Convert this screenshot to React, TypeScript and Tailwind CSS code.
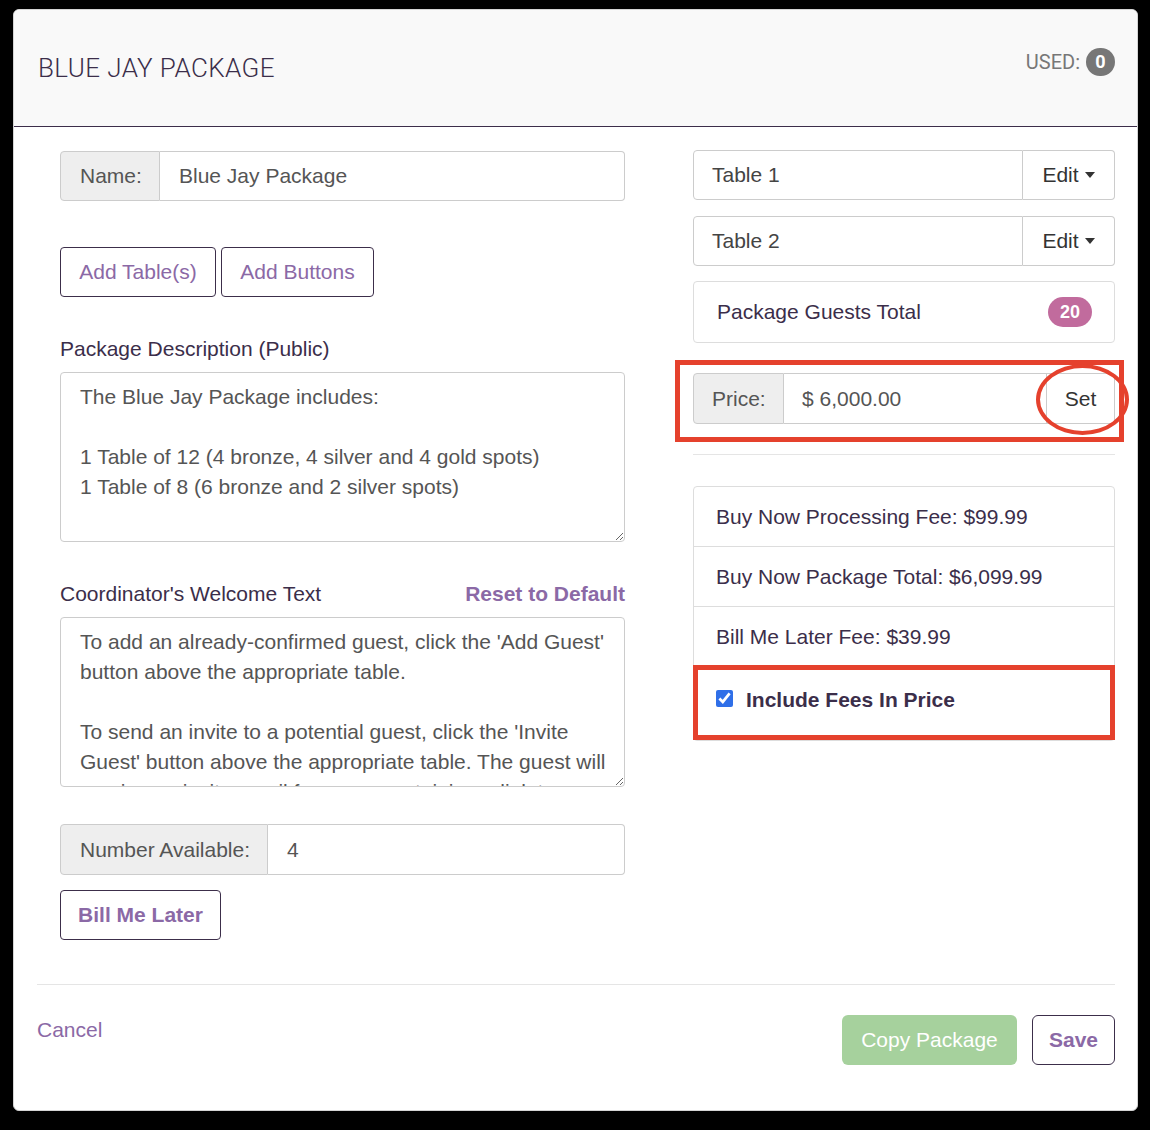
import React from "react";

const PURPLE = "text-[#8b69a6]";

function Caret() {
  return (
    <span className="ml-[6px] inline-block h-0 w-0 border-x-[5px] border-t-[6px] border-x-transparent border-t-[#333]" />
  );
}

function AddonGroup({
  label,
  value,
  addonW,
  h = "h-[50px]",
}: {
  label: string;
  value: string;
  addonW: string;
  h?: string;
}) {
  return (
    <div className={`flex ${h} w-full`}>
      <div
        className={`${addonW} flex shrink-0 items-center rounded-l-[4px] border border-[#ccc] bg-[#eee] pl-[19px] text-[21px] text-[#555]`}
      >
        {label}
      </div>
      <div className="flex flex-1 items-center rounded-r-[4px] border border-l-0 border-[#ccc] bg-white pl-[19px] text-[21px] text-[#555]">
        {value}
      </div>
    </div>
  );
}

function TableRow({ name }: { name: string }) {
  return (
    <div className="flex h-[50px] w-full">
      <div className="flex flex-1 items-center rounded-l-[4px] border border-[#ccc] bg-white pl-[18px] text-[21px] text-[#444]">
        {name}
      </div>
      <div className="flex w-[92px] shrink-0 items-center justify-center rounded-r-[4px] border border-l-0 border-[#ccc] bg-white text-[21px] text-[#333]">
        Edit
        <Caret />
      </div>
    </div>
  );
}

const descText =
  "The Blue Jay Package includes:\n\n1 Table of 12 (4 bronze, 4 silver and 4 gold spots)\n1 Table of 8 (6 bronze and 2 silver spots)";

const welcomeText =
  "To add an already-confirmed guest, click the 'Add Guest' button above the appropriate table.\n\nTo send an invite to a potential guest, click the 'Invite Guest' button above the appropriate table. The guest will receive an invite email from you containing a link to purchase a spot at this table.";

export default function App() {
  return (
    <div
      className="min-h-[1130px] w-[1150px] bg-black pl-[13px] pt-[9px]"
      style={{ fontFamily: '"Liberation Sans", Arial, sans-serif' }}
    >
      <div className="flex h-[1102px] w-[1125px] flex-col overflow-hidden rounded-[6px] border border-[#d4d4d4] bg-white">
        {/* Header */}
        <div className="flex h-[117px] shrink-0 items-center justify-between border-b border-[#3c2e4a] bg-[#f9f9f9] pl-[24px] pr-[22px]">
          <h1
            className="text-[26px] font-light tracking-[0.4px] text-[#3b2e4a]"
            style={{ fontFamily: "Roboto, sans-serif" }}
          >
            BLUE JAY PACKAGE
          </h1>
          <div
            className="mb-[13px] flex items-center gap-[6px] text-[20px] text-[#777]"
            style={{ fontFamily: "Roboto, sans-serif" }}
          >
            <span>USED:</span>
            <span className="flex h-[28px] w-[29px] items-center justify-center rounded-full bg-[#777] text-[18px] font-bold text-white">
              0
            </span>
          </div>
        </div>

        {/* Body */}
        <div className="flex gap-[68px] pl-[46px] pr-[22px] pt-[24px]">
          {/* Left column */}
          <div className="flex w-[565px] shrink-0 flex-col">
            <AddonGroup label="Name:" value="Blue Jay Package" addonW="w-[100px]" />

            <div className="mt-[46px] flex gap-[5px]">
              <button className={`h-[50px] w-[156px] rounded-[4px] border border-[#3c2e4a] bg-white text-[21px] ${PURPLE}`}>
                Add Table(s)
              </button>
              <button className={`h-[50px] w-[153px] rounded-[4px] border border-[#3c2e4a] bg-white text-[21px] ${PURPLE}`}>
                Add Buttons
              </button>
            </div>

            <div className="mt-[40px] text-[21px] leading-[24px] text-[#3b2e4a]">
              Package Description (Public)
            </div>
            <textarea
              readOnly
              defaultValue={descText}
              className="mt-[11px] block h-[170px] w-full resize-y overflow-hidden rounded-[4px] border border-[#ccc] bg-white px-[19px] py-[9px] text-[21px] leading-[30px] text-[#555] outline-none"
            />

            <div className="mt-[40px] flex items-center justify-between text-[21px] leading-[24px]">
              <span className="text-[#3b2e4a]">Coordinator's Welcome Text</span>
              <span className={`font-bold ${PURPLE}`}>Reset to Default</span>
            </div>
            <textarea
              readOnly
              defaultValue={welcomeText}
              className="mt-[11px] block h-[170px] w-full resize-y overflow-hidden rounded-[4px] border border-[#ccc] bg-white py-[9px] pl-[19px] pr-[14px] text-[21px] leading-[30px] text-[#555] outline-none"
            />

            <div className="mt-[37px]">
              <AddonGroup label="Number Available:" value="4" addonW="w-[208px]" h="h-[51px]" />
            </div>

            <button className={`mt-[15px] h-[50px] w-[161px] rounded-[4px] border border-[#3c2e4a] bg-white text-[21px] font-bold ${PURPLE}`}>
              Bill Me Later
            </button>
          </div>

          {/* Right column */}
          <div className="flex w-[422px] shrink-0 flex-col">
            <div className="-mt-[1px]">
              <TableRow name="Table 1" />
            </div>
            <div className="mt-[16px]">
              <TableRow name="Table 2" />
            </div>

            <div className="mt-[15px] flex h-[62px] items-center justify-between rounded-[4px] border border-[#ddd] bg-white pl-[23px] pr-[22px]">
              <span className="text-[21px] text-[#3b2e4a]">Package Guests Total</span>
              <span className="flex h-[30px] w-[44px] items-center justify-center rounded-full bg-[#c16b9d] text-[18px] font-bold text-white">
                20
              </span>
            </div>

            {/* Price group with annotation */}
            <div className="relative mt-[30px] flex h-[51px] w-full">
              <div className="flex w-[91px] shrink-0 items-center rounded-l-[4px] border border-[#ccc] bg-[#eee] pl-[18px] text-[21px] text-[#555]">
                Price:
              </div>
              <div className="flex flex-1 items-center border border-l-0 border-[#ccc] bg-white pl-[18px] text-[21px] text-[#555]">
                $ 6,000.00
              </div>
              <div className="flex w-[68px] shrink-0 items-center justify-center rounded-r-[4px] border border-l-0 border-[#ccc] bg-white text-[21px] text-[#333]">
                Set
              </div>
              <div className="pointer-events-none absolute left-[-18px] top-[-13px] h-[82px] w-[449px] border-[5px] border-[#e5412d]" />
              <div className="pointer-events-none absolute left-[343px] top-[-9px] h-[71px] w-[93px] rounded-[50%] border-[4px] border-[#e5412d]" />
            </div>

            <div className="mt-[30px] border-t border-[#e5e5e5]" />

            <div className="mt-[31px] flex flex-col rounded-[4px] border border-[#ddd] bg-white">
              <div className="flex h-[60px] items-center border-b border-[#ddd] pl-[22px] text-[21px] text-[#3b2e4a]">
                Buy Now Processing Fee: $99.99
              </div>
              <div className="flex h-[60px] items-center border-b border-[#ddd] pl-[22px] text-[21px] text-[#3b2e4a]">
                Buy Now Package Total: $6,099.99
              </div>
              <div className="flex h-[59px] items-center pl-[22px] text-[21px] text-[#3b2e4a]">
                Bill Me Later Fee: $39.99
              </div>
              <div className="relative flex h-[74px] items-start pl-[22px] pt-[22px]">
                <input
                  type="checkbox"
                  checked
                  readOnly
                  className="m-0 mt-[2px] h-[17px] w-[17px] accent-[#2f6fe8]"
                />
                <span className="ml-[13px] text-[21px] font-bold leading-[24px] text-[#3b2e4a]">
                  Include Fees In Price
                </span>
                <div className="pointer-events-none absolute left-[-1px] top-[-1px] h-[75px] w-[422px] border-[5px] border-[#e5412d]" />
              </div>
            </div>
          </div>
        </div>

        {/* Footer */}
        <div className="ml-[23px] mr-[22px] mt-[44px] flex items-start justify-between border-t border-[#e5e5e5] pt-[30px]">
          <span className={`mt-[3px] text-[21px] leading-[24px] ${PURPLE}`}>Cancel</span>
          <div className="flex gap-[15px]">
            <button className="h-[50px] w-[175px] rounded-[6px] bg-[#a6d19d] text-[21px] text-white">
              Copy Package
            </button>
            <button className={`h-[50px] w-[83px] rounded-[6px] border border-[#3c2e4a] bg-white text-[21px] font-bold ${PURPLE}`}>
              Save
            </button>
          </div>
        </div>
      </div>
    </div>
  );
}
